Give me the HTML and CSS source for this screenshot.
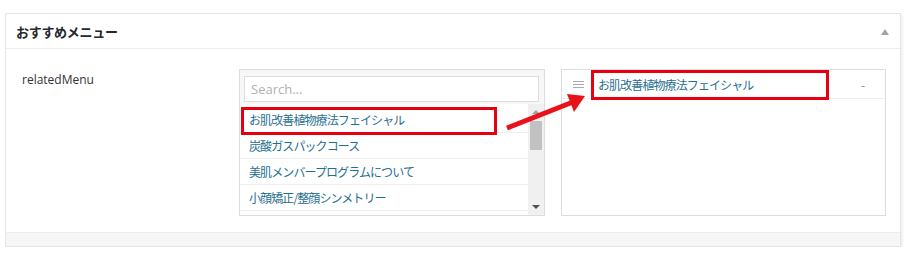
FILE: index.html
```html
<!DOCTYPE html>
<html lang="ja">
<head>
  <meta charset="UTF-8">
  <title>おすすめメニュー</title>
  <link rel="stylesheet" href="styles.css">
</head>
<body>
<div class="wrap">
  <div class="postbox">
    <div class="hndle">
      <h2>おすすめメニュー</h2>
      <span class="toggle"></span>
    </div>
    <div class="inside">
      <div class="label">relatedMenu</div>
      <div class="field">
        <div class="choices">
          <div class="search"><input type="text" placeholder="Search..."></div>
          <div class="list">
            <ul>
              <li>お肌改善植物療法フェイシャル</li>
              <li>炭酸ガスパックコース</li>
              <li>美肌メンバープログラムについて</li>
              <li>小顔矯正/整顔シンメトリー</li>
              <li></li>
            </ul>
            <div class="scrollbar">
              <span class="up"></span>
              <span class="thumb"></span>
              <span class="down"></span>
            </div>
          </div>
        </div>
        <div class="values">
          <ul>
            <li><span class="handle"></span><span class="name">お肌改善植物療法フェイシャル</span><span class="remove">-</span></li>
          </ul>
        </div>
      </div>
    </div>
    <div class="footer"></div>

    <!-- 注釈 -->
    <div class="mark mark-left"></div>
    <div class="mark mark-right"></div>
    <svg class="arrow" width="100" height="50" viewBox="0 0 100 50">
      <line x1="6" y1="44" x2="72" y2="18" stroke="#e8121b" stroke-width="5"/>
      <polygon points="84,12 66,10 73,28" fill="#e8121b"/>
    </svg>
  </div>
</div>
</body>
</html>
```

FILE: styles.css
```css
* {
  padding: 0;
  margin: 0;
  list-style: none;
  box-sizing: border-box;
}

body {
  background: #fff;
  font-family: "Open Sans", "Noto Sans CJK JP", sans-serif;
  font-size: 12px;
  color: #444;
}

.wrap {
  padding: 13px 0 0 5px;
}

.postbox {
  position: relative;
  width: 896px;
  border: 1px solid #e5e5e5;
  background: #fff;
  box-shadow: 2px 2px 2px rgba(0, 0, 0, 0.06);
}

.hndle {
  display: flex;
  align-items: center;
  justify-content: space-between;
  height: 35px;
  padding: 0 11px 0 10px;
  border-bottom: 1px solid #eee;
}

.hndle h2 {
  font-family: "Noto Sans CJK JP", sans-serif;
  font-size: 13px;
  font-weight: bold;
  color: #23282d;
  letter-spacing: -0.3px;
}

.toggle {
  width: 0;
  height: 0;
  border-left: 4px solid transparent;
  border-right: 4px solid transparent;
  border-bottom: 6px solid #a0a5aa;
  margin-top: 1px;
}

.inside {
  display: flex;
  padding: 20px 14px 16px 16px;
  border-bottom: 1px solid #eee;
}

.label {
  width: 218px;
  padding-top: 2px;
  color: #333;
  font-size: 12px;
}

.field {
  display: flex;
  gap: 16px;
}

.choices {
  width: 306px;
  height: 147px;
  border: 1px solid #ddd;
  background: #f7f7f7;
}

.search {
  padding: 6px 5px 2px 4px;
}

.search input {
  width: 100%;
  height: 26px;
  border: 1px solid #ddd;
  padding: 0 6px;
  font-family: "Open Sans", sans-serif;
  font-size: 13px;
  background: #fff;
  outline: none;
}

.search input::placeholder {
  color: #b0b0b0;
}

.list {
  display: flex;
  height: 111px;
  overflow: hidden;
  background: #fff;
}

.list ul {
  flex: 1;
  padding-top: 3px;
}

.list li,
.values li {
  height: 26px;
  line-height: 25px;
  padding-left: 9px;
  border-bottom: 1px solid #eee;
  font-family: "Noto Sans CJK JP", sans-serif;
  font-size: 12px;
  letter-spacing: -0.9px;
  color: #1f6f8f;
  white-space: nowrap;
}

.scrollbar {
  display: flex;
  flex-direction: column;
  align-items: center;
  width: 16px;
  background: #f0f0f0;
  padding: 6px 0;
}

.scrollbar .up {
  border-left: 4px solid transparent;
  border-right: 4px solid transparent;
  border-bottom: 4px solid #a3a3a3;
}

.scrollbar .thumb {
  width: 12px;
  height: 29px;
  margin-top: 7px;
  background: #c1c1c1;
}

.scrollbar .down {
  margin-top: auto;
  border-left: 4px solid transparent;
  border-right: 4px solid transparent;
  border-top: 4px solid #505050;
}

.values {
  width: 325px;
  height: 147px;
  border: 1px solid #ddd;
  background: #fff;
}

.values li {
  display: flex;
  align-items: center;
  height: 29px;
  padding-left: 11px;
}

.handle {
  width: 11px;
  height: 7px;
  border-top: 1px solid #aaa;
  border-bottom: 1px solid #aaa;
  margin-right: 14px;
}

.handle::after {
  content: "";
  display: block;
  height: 1px;
  margin-top: 2px;
  background: #aaa;
}

.values .name {
  flex: 1;
}

.values .remove {
  width: 24px;
  color: #888;
  letter-spacing: 0;
}

.footer {
  height: 13px;
  background: #f6f6f6;
}

/* 注釈 */
.mark {
  position: absolute;
  border: 3px solid #e60012;
}

.mark-left {
  left: 235px;
  top: 93px;
  width: 256px;
  height: 28px;
}

.mark-right {
  left: 585px;
  top: 56px;
  width: 238px;
  height: 30px;
}

.arrow {
  position: absolute;
  left: 495px;
  top: 70px;
}
```
